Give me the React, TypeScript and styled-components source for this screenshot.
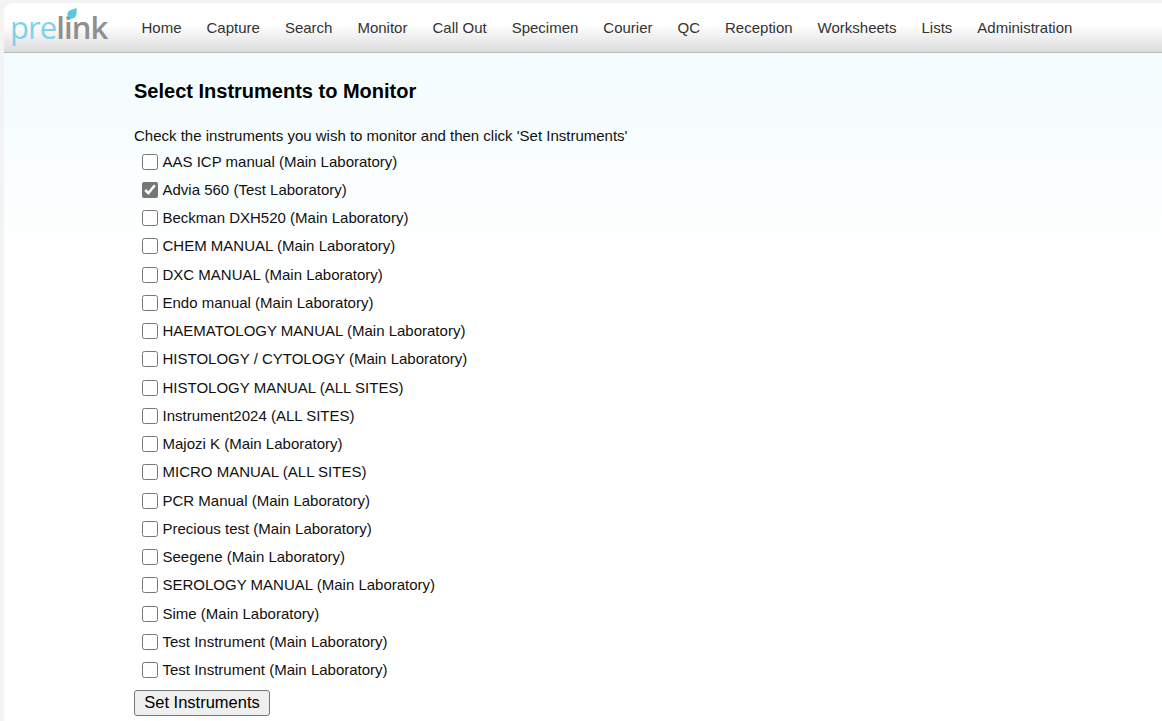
import React from "react";
import styled, { createGlobalStyle } from "styled-components";

const Global = createGlobalStyle`
  html, body { margin: 0; padding: 0; background: #fff; height: 721px; overflow: hidden; }
  body { font-family: "Liberation Sans", Arial, sans-serif; font-size: 15px; color: #111; }
`;
const Page = styled.div`
  padding: 3px 0 0 4px;
  height: 721px;
  box-sizing: border-box;
  background: #f3f3f3;
`;
const Shell = styled.div`
  height: 718px;
  background: #fff;
  border-top-left-radius: 9px;
`;
const NavBar = styled.nav`
  height: 49px;
  display: flex;
  align-items: center;
  border-top-left-radius: 9px;
  border-bottom: 1px solid #b9b9bc;
  background: linear-gradient(to bottom, #ffffff 0%, #ffffff 45%, #dcdcdc 100%);
`;
const Logo = styled.div`
  position: relative;
  width: 137.5px;
  padding-left: 6px;
  box-sizing: border-box;
  font-family: "Open Sans", sans-serif;
  font-size: 31px;
  line-height: 49px;
  letter-spacing: -0.9px;
  flex: none;
  white-space: nowrap;
`;
const LogoPre = styled.span` color: #7dd3ea; `;
const LogoLink = styled.span` color: #8f8f8f; font-weight: 600; `;
const Drop = styled.svg`
  position: absolute;
  left: 62.5px;
  top: 5px;
`;
const NavItem = styled.a`
  font-size: 15px;
  color: #333;
  margin-right: 25px;
  white-space: nowrap;
`;
const Content = styled.main`
  height: 668px;
  padding: 26px 0 0 130px;
  box-sizing: border-box;
  background: linear-gradient(to bottom, #f3fcfe 0%, #ffffff 32%);
`;
const Title = styled.h1`
  margin: 0 0 24px;
  font-size: 20px;
  line-height: 24px;
  font-weight: bold;
  color: #000;
`;
const Intro = styled.p`
  margin: 0;
  line-height: 17px;
  color: #111;
`;
const List = styled.div`
  display: flex;
  flex-direction: column;
  margin-top: 3px;
`;
const Row = styled.label`
  display: flex;
  align-items: center;
  height: 28.25px;
  padding-left: 8px;
  white-space: nowrap;
`;
const Check = styled.input.attrs({ type: "checkbox" })`
  width: 16px;
  height: 16px;
  margin: 1px 4.5px 0 0;
  accent-color: #767676;
`;
const Button = styled.button`
  display: block;
  margin-top: 6.5px;
  width: 136px;
  height: 26px;
  padding: 0 0 2px;
  font-family: "Liberation Sans", Arial, sans-serif;
  font-size: 16.5px;
  color: #000;
  background: #efefef;
  border: 1px solid #767676;
  border-radius: 3px;
`;

const nav = ["Home","Capture","Search","Monitor","Call Out","Specimen","Courier","QC","Reception","Worksheets","Lists","Administration"];
const items = [
  "AAS ICP manual (Main Laboratory)",
  "Advia 560 (Test Laboratory)",
  "Beckman DXH520 (Main Laboratory)",
  "CHEM MANUAL (Main Laboratory)",
  "DXC MANUAL (Main Laboratory)",
  "Endo manual (Main Laboratory)",
  "HAEMATOLOGY MANUAL (Main Laboratory)",
  "HISTOLOGY / CYTOLOGY (Main Laboratory)",
  "HISTOLOGY MANUAL (ALL SITES)",
  "Instrument2024 (ALL SITES)",
  "Majozi K (Main Laboratory)",
  "MICRO MANUAL (ALL SITES)",
  "PCR Manual (Main Laboratory)",
  "Precious test (Main Laboratory)",
  "Seegene (Main Laboratory)",
  "SEROLOGY MANUAL (Main Laboratory)",
  "Sime (Main Laboratory)",
  "Test Instrument (Main Laboratory)",
  "Test Instrument (Main Laboratory)",
];

export default function App() {
  return (
    <Page>
      <Global />
      <Shell>
        <NavBar>
          <Logo>
            <LogoPre>pre</LogoPre><LogoLink>link</LogoLink>
            <Drop width="10" height="11" viewBox="0 0 10 11">
              <path d="M9.5 0 C10 4 10 10.5 4.8 10.5 C1.5 10.5 0 8 0.5 5.5 C1 2 6 1.5 9.5 0 Z" fill="#5cc6e2" />
            </Drop>
          </Logo>
          {nav.map((n) => <NavItem key={n}>{n}</NavItem>)}
        </NavBar>
        <Content>
          <Title>Select Instruments to Monitor</Title>
          <Intro>Check the instruments you wish to monitor and then click 'Set Instruments'</Intro>
          <List>
            {items.map((t, i) => (
              <Row key={i}>
                <Check defaultChecked={i === 1} />
                {t}
              </Row>
            ))}
          </List>
          <Button>Set Instruments</Button>
        </Content>
      </Shell>
    </Page>
  );
}
